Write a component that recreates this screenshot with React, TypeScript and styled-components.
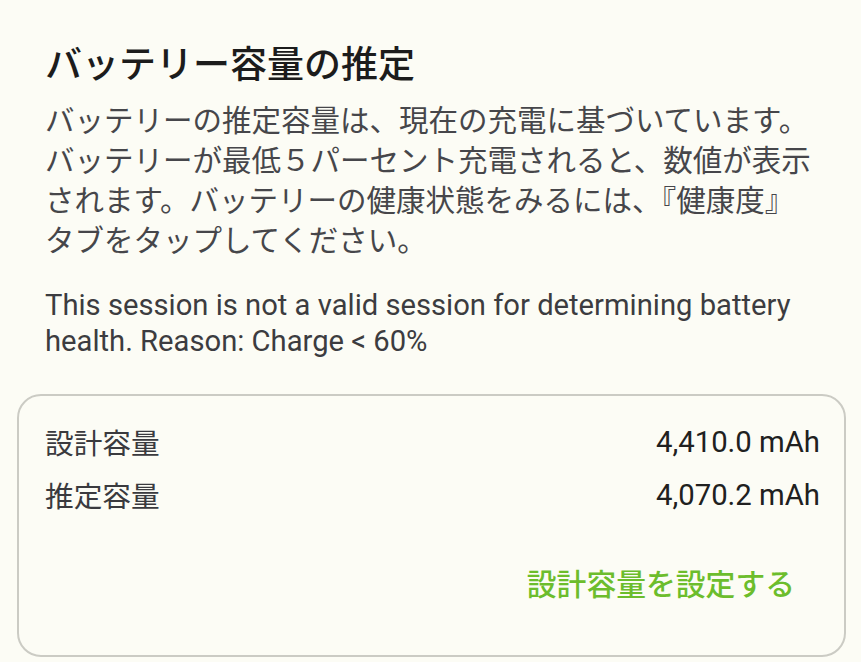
import React from "react";
import styled, { createGlobalStyle } from "styled-components";

const Global = createGlobalStyle`
  html, body { margin: 0; padding: 0; background: #fcfcf5; }
  body { font-family: "Noto Sans CJK JP", "Noto Sans", sans-serif; }
`;

const Page = styled.div`
  width: 861px;
  height: 662px;
  box-sizing: border-box;
  padding: 38px 15px 0 17px;
  background: #fcfcf5;
  display: flex;
  flex-direction: column;
  overflow: hidden;
`;

const Intro = styled.div`
  padding: 0 20px 0 28px;
  display: flex;
  flex-direction: column;
`;

const Title = styled.h1`
  margin: 0;
  font-family: "Noto Sans CJK JP", sans-serif;
  font-size: 37px;
  font-weight: 500;
  line-height: 48px;
  color: #1c1c1c;
`;

const Body = styled.p`
  margin: 12px 0 0 0;
  font-family: "Noto Sans CJK JP", sans-serif;
  font-size: 29.5px;
  font-weight: 400;
  line-height: 40px;
  color: #46464a;
  white-space: nowrap;
`;

const Note = styled.p`
  margin: 29px 0 0 0;
  font-family: Roboto, "Noto Sans", sans-serif;
  font-size: 29.2px;
  line-height: 36px;
  color: #3c3c40;
`;

const Card = styled.div`
  margin-top: 35px;
  border: 2px solid #cbcbc4;
  border-radius: 24px;
  padding: 19px 24px 0 26px;
  height: 263px;
  box-sizing: border-box;
  display: flex;
  flex-direction: column;
`;

const Row = styled.div`
  display: flex;
  justify-content: space-between;
  align-items: center;
  height: 53px;
`;

const Label = styled.span`
  font-family: "Noto Sans CJK JP", sans-serif;
  font-size: 28.7px;
  color: #3a3a3e;
`;

const Value = styled.span`
  font-family: Roboto, sans-serif;
  font-size: 29.3px;
  color: #202020;
`;

const Actions = styled.div`
  display: flex;
  justify-content: flex-end;
  margin-top: 39px;
  padding-right: 25px;
`;

const LinkButton = styled.button`
  background: none;
  border: none;
  padding: 0;
  font-family: "Noto Sans CJK JP", sans-serif;
  font-size: 29.8px;
  font-weight: 500;
  color: #6cbd2c;
  cursor: pointer;
`;

export default function App() {
  return (
    <>
      <Global />
      <Page>
        <Intro>
          <Title>バッテリー容量の推定</Title>
          <Body>
            バッテリーの推定容量は、現在の充電に基づいています。
            <br />
            バッテリーが最低５パーセント充電されると、数値が表示
            <br />
            されます。バッテリーの健康状態をみるには、『健康度』
            <br />
            タブをタップしてください。
          </Body>
          <Note>
            This session is not a valid session for determining battery health. Reason: Charge &lt; 60%
          </Note>
        </Intro>
        <Card>
          <Row>
            <Label>設計容量</Label>
            <Value>4,410.0 mAh</Value>
          </Row>
          <Row>
            <Label>推定容量</Label>
            <Value>4,070.2 mAh</Value>
          </Row>
          <Actions>
            <LinkButton>設計容量を設定する</LinkButton>
          </Actions>
        </Card>
      </Page>
    </>
  );
}
